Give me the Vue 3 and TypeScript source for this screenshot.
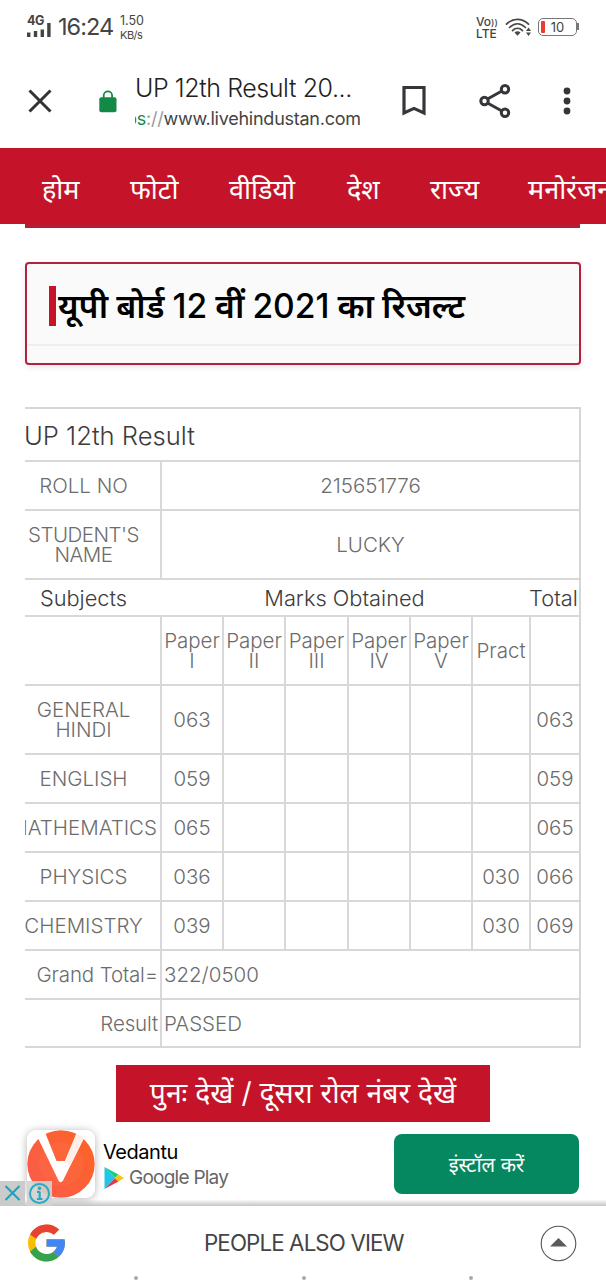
<script setup lang="ts">
interface Subject {
  name: string
  marks: string
  pract: string
  total: string
  kind: string
}

const menu: string[] = ['होम', 'फोटो', 'वीडियो', 'देश', 'राज्य', 'मनोरंजन']

const papers: string[] = ['I', 'II', 'III', 'IV', 'V']

const subjects: Subject[] = [
  { name: 'GENERAL HINDI', marks: '063', pract: '', total: '063', kind: 'tall' },
  { name: 'ENGLISH', marks: '059', pract: '', total: '059', kind: '' },
  { name: 'MATHEMATICS', marks: '065', pract: '', total: '065', kind: 'clipped' },
  { name: 'PHYSICS', marks: '036', pract: '030', total: '066', kind: '' },
  { name: 'CHEMISTRY', marks: '039', pract: '030', total: '069', kind: '' },
]

const summary: { label: string; value: string }[] = [
  { label: 'Grand Total=', value: '322/0500' },
  { label: 'Result', value: 'PASSED' },
]
</script>

<template>
  <div class="screen">
    <header class="status">
      <div class="signal">
        <span class="net">4G</span>
        <svg width="24" height="15" viewBox="0 0 24 15">
          <path d="M0 10.500h3.400V15H0zM6.800 9h3.400v6H6.800zM13.600 7.500h3.400V15h-3.400zM20.200 1h3.400v14h-3.400z" fill="#444" />
        </svg>
      </div>
      <span class="clock">16:24</span>
      <div class="speed"><span>1.50</span><span>KB/s</span></div>
      <div class="grow"></div>
      <div class="volte"><span>Vo<i>))</i></span><span>LTE</span></div>
      <svg class="wifi" width="27" height="20" viewBox="0 0 27 20">
        <g fill="none" stroke="#484848" stroke-width="1.7" stroke-linecap="round">
          <path d="M1.500 6.200C8-.2 17-.2 23.500 6.200" />
          <path d="M4.500 9.500C9.500 4.600 15.500 4.600 20.500 9.500" />
          <path d="M7.500 12.600C10.500 9.600 14.500 9.600 17.500 12.600" />
        </g>
        <path d="M9.500 14.500Q12.500 12 15.500 14.500L12.500 17.700z" fill="#484848" />
        <path d="M21 13l2.500-3.500L26 13zM21 14.500h5L23.500 18z" fill="#484848" />
      </svg>
      <div class="battery"><i></i><span>10</span></div>
    </header>

    <section class="browser">
      <svg class="close" width="26" height="26" viewBox="0 0 26 26">
        <path d="M2.500 2.500l21 21M23.500 2.500l-21 21" stroke="#333" stroke-width="3" fill="none" />
      </svg>
      <svg class="lock" width="18" height="23" viewBox="0 0 18 23">
        <path d="M4.700 8V5.500a4.200 4.200 0 0 1 8.400 0V8" fill="none" stroke="#128a45" stroke-width="1.800" />
        <rect x="0.300" y="7.300" width="17.200" height="15" rx="2" fill="#128a45" />
      </svg>
      <div class="address">
        <span class="title">UP 12th Result 20...</span>
        <span class="url"><b>ps</b><em>://</em>www.livehindustan.com</span>
      </div>
      <svg class="mark" width="24" height="31" viewBox="0 0 24 31">
        <path d="M2 2.500h20V28l-10-4.600L2 28z" fill="none" stroke="#35363a" stroke-width="3.200" />
      </svg>
      <svg class="share" width="32" height="36" viewBox="0 0 32 36">
        <g fill="none" stroke="#35363a" stroke-width="3">
          <path d="M8.500 16L22 8.500M8.500 20L22 27.500" />
          <circle cx="5.500" cy="18" r="3.700" />
          <circle cx="26" cy="6.300" r="3.700" />
          <circle cx="26" cy="29.700" r="3.700" />
        </g>
      </svg>
      <svg class="more" width="8" height="28" viewBox="0 0 8 28">
        <g fill="#35363a"><circle cx="4" cy="4" r="3.400" /><circle cx="4" cy="14" r="3.400" /><circle cx="4" cy="24" r="3.400" /></g>
      </svg>
    </section>

    <nav class="menu">
      <a v-for="(m, i) in menu" :key="m" :class="'m' + i">{{ m }}</a>
    </nav>
    <div class="strip"></div>

    <section class="headline">
      <div class="headline-row">
        <h1>यूपी बोर्ड <span>12</span> वीं <span>2021</span> का रिजल्ट</h1>
      </div>
    </section>

    <section class="marks">
      <div class="cell caption"><span>UP 12th Result</span></div>

      <div class="cell label line"><span>ROLL NO</span></div>
      <div class="cell wide"><span>215651776</span></div>

      <div class="cell label line"><span class="student">STUDENT'S<br />NAME</span></div>
      <div class="cell wide"><span>LUCKY</span></div>

      <div class="cell label dark"><span>Subjects</span></div>
      <div class="cell six dark"><span>Marks Obtained</span></div>
      <div class="cell dark sum"><span>Total</span></div>

      <div class="cell label line"></div>
      <div v-for="p in papers" :key="p" class="cell line"><span>Paper<br />{{ p }}</span></div>
      <div class="cell line"><span>Pract</span></div>
      <div class="cell"></div>

      <template v-for="s in subjects" :key="s.name">
        <div class="cell label line subject" :class="s.kind"><span>{{ s.name }}</span></div>
        <div class="cell line"><span>{{ s.marks }}</span></div>
        <div v-for="n in 4" :key="n" class="cell line"></div>
        <div class="cell line"><span>{{ s.pract }}</span></div>
        <div class="cell"><span>{{ s.total }}</span></div>
      </template>

      <template v-for="r in summary" :key="r.label">
        <div class="cell label line right"><span>{{ r.label }}</span></div>
        <div class="cell wide left"><span>{{ r.value }}</span></div>
      </template>
    </section>

    <button class="again">पुनः देखें / दूसरा रोल नंबर देखें</button>

    <section class="ad">
      <svg class="app" width="68" height="68" viewBox="0 0 68 68">
        <defs>
          <clipPath id="tile"><rect width="68" height="68" rx="9" /></clipPath>
          <linearGradient id="warm" x1="0" y1="1" x2="1" y2="0.200">
            <stop offset="0" stop-color="#fb5a50" /><stop offset="1" stop-color="#fb6426" />
          </linearGradient>
        </defs>
        <rect width="68" height="68" rx="9" fill="#fff" />
        <g clip-path="url(#tile)">
          <circle cx="34" cy="34" r="33.700" fill="url(#warm)" />
          <circle cx="34" cy="34" r="22" fill="#ff7048" opacity="0.350" />
          <path d="M9 4L17.500 1 29.500 31h8.500L50.500 1 59 4 36 50.500q-2.300 3.500-4.500 0z" fill="#fff" />
          <path d="M49.300 4L57.500 7 43 36l-5-5z" fill="#fdeeea" />
        </g>
      </svg>
      <div class="store">
        <span class="name">Vedantu</span>
        <div class="play">
          <svg width="20" height="24" viewBox="0 0 20 24">
            <path d="M0.500 1v22L11 12z" fill="#20c5ea" />
            <path d="M0.500 1L11 12l3.500-3.500z" fill="#16cf86" />
            <path d="M0.500 23L11 12l3.500 3.500z" fill="#e63950" />
            <path d="M14.500 8.500L20 12l-5.500 3.500L11 12z" fill="#fbc50e" />
          </svg>
          <span>Google Play</span>
        </div>
      </div>
      <button class="install">इंस्टॉल करें</button>
      <div class="adtools">
        <svg width="25" height="25" viewBox="0 0 25 25">
          <rect width="25" height="25" fill="#cbcbcb" />
          <path d="M5.500 5l14 14M19.500 5l-14 14" stroke="#16a3bd" stroke-width="2" />
        </svg>
        <svg width="25" height="25" viewBox="0 0 25 25">
          <rect width="25" height="25" fill="#d3d1cf" fill-opacity="0.900" />
          <circle cx="12.500" cy="12.500" r="9.500" fill="none" stroke="#2ba9c0" stroke-width="2" />
          <path d="M12.700 10.500V18M10 10.800h2.700M10 18h5.500" stroke="#2ba9c0" stroke-width="2.200" />
          <circle cx="12.500" cy="7.300" r="1.700" fill="#2ba9c0" />
        </svg>
      </div>
    </section>

    <footer class="sheet">
      <svg class="google" width="37" height="38" viewBox="4 4 40 40">
        <path fill="#fbbc05" d="M43.600 20H42v0H24v8h11.300C33.700 32.700 29.200 36 24 36c-6.600 0-12-5.400-12-12s5.400-12 12-12c3.100 0 5.800 1.200 8 3l5.700-5.600C34 6.100 29.300 4 24 4 13 4 4 13 4 24s9 20 20 20 20-9 20-20c0-1.300-.1-2.700-.4-4z" />
        <path fill="#e84235" d="M6.300 14.700l6.600 4.800C14.700 15.100 19 12 24 12c3.100 0 5.800 1.200 8 3l5.700-5.600C34 6.100 29.300 4 24 4 16.300 4 9.700 8.300 6.300 14.700z" />
        <path fill="#34a350" d="M24 44c5.200 0 9.900-2 13.400-5.200l-6.200-5.200C29.200 35.100 26.700 36 24 36c-5.200 0-9.600-3.300-11.300-7.900l-6.500 5C9.500 39.600 16.200 44 24 44z" />
        <path fill="#4285f4" d="M43.600 20H24v8h11.300c-.8 2.200-2.200 4.200-4.100 5.600l6.200 5.200C37 39.200 44 34 44 24c0-1.300-.1-2.700-.4-4z" />
      </svg>
      <span class="people">PEOPLE ALSO VIEW</span>
      <svg class="up" width="37" height="37" viewBox="0 0 37 37">
        <circle cx="18.500" cy="18.500" r="17.300" fill="#fff" stroke="#555" stroke-width="1.100" />
        <path d="M10 21.500L18.500 13l8.500 8.500z" fill="#5a5b5f" />
      </svg>
      <div class="dots"><i></i><i></i><i></i></div>
    </footer>
  </div>
</template>

<style>
body {
  background: #fff;
}
</style>

<style scoped>
.screen {
  width: 606px;
  height: 1280px;
  overflow: hidden;
  background: #fff;
  font-family: Inter, 'Noto Sans', sans-serif;
  color: #444;
  display: flex;
  flex-direction: column;
}
.screen * {
  box-sizing: border-box;
}
.screen > * {
  flex: none;
}
.status {
  height: 56px;
  display: flex;
  padding: 0 29px 0 27px;
}
.signal {
  width: 31px;
  padding-top: 14px;
  display: flex;
  flex-direction: column;
}
.net {
  font-size: 12.5px;
  line-height: 14px;
  font-weight: 700;
  height: 8px;
  letter-spacing: -0.5px;
}
.signal svg {
  display: block;
}
.clock {
  font-size: 23.5px;
  line-height: 30px;
  padding-top: 12px;
  width: 62px;
  letter-spacing: -0.95px;
  white-space: nowrap;
}
.speed {
  display: flex;
  flex-direction: column;
  font-size: 12.5px;
  line-height: 15px;
  padding-top: 13px;
}
.speed span:last-child {
  font-size: 11px;
  letter-spacing: -0.5px;
}
.grow {
  flex: 1;
}
.volte {
  display: flex;
  flex-direction: column;
  font-size: 12px;
  line-height: 11px;
  font-weight: 500;
  padding-top: 16px;
  width: 29px;
}
.volte i {
  font-style: normal;
  font-size: 9px;
}
.wifi {
  margin-top: 18px;
}
.battery {
  position: relative;
  margin: 18px 0 0 6px;
  width: 39px;
  height: 18px;
  border: 1.5px solid #777;
  border-radius: 5px;
  display: flex;
  align-items: center;
  justify-content: center;
  font-size: 13px;
}
.battery i {
  position: absolute;
  left: 2px;
  top: 2px;
  width: 3.5px;
  height: 12px;
  background: #ee3b30;
  border-radius: 1px;
}
.battery::after {
  content: '';
  position: absolute;
  right: -3px;
  top: 4px;
  width: 2px;
  height: 7px;
  background: #777;
}
.browser {
  height: 92px;
  display: flex;
  padding-left: 27px;
}
.close {
  margin-top: 32px;
}
.lock {
  margin: 34px 0 0 46px;
}
.address {
  margin-left: 18px;
  width: 240px;
  padding-top: 15px;
  display: flex;
  flex-direction: column;
  overflow: hidden;
  white-space: nowrap;
}
.title {
  font-size: 25px;
  line-height: 34px;
  font-weight: 300;
  letter-spacing: -0.42px;
  color: #222;
}
.url {
  font-size: 18px;
  line-height: 28px;
  margin-left: -9px;
  letter-spacing: -0.25px;
  color: #444;
}
.url b {
  font-weight: 400;
  color: #128a45;
}
.url em {
  font-style: normal;
  color: #999;
}
.mark {
  margin: 29px 0 0 27px;
}
.share {
  margin: 27px 0 0 53px;
}
.more {
  margin: 31px 0 0 52px;
}
.menu {
  height: 76px;
  background: #c51429;
  display: flex;
  align-items: center;
  padding: 5px 0 0 42px;
  color: #fff;
  font-size: 27px;
  white-space: nowrap;
  overflow: hidden;
}
.menu a {
  flex: none;
  width: 88px;
}
.menu .m1 { width: 99px; }
.menu .m2 { width: 118px; }
.menu .m3 { width: 83px; }
.menu .m4 { width: 98px; }
.strip {
  height: 4px;
  margin: 0 26px 0 25px;
  background: #b81c35;
}
.headline {
  margin: 34px 25px 0 25px;
  height: 103px;
  border: 2px solid #b0233f;
  border-radius: 4px;
  background: #fafafa;
  box-shadow: 0 2px 6px rgba(0, 0, 0, 0.1);
}
.headline-row {
  height: 82px;
  border-bottom: 2px solid #eee;
  padding: 22px 0 0 22px;
}
h1 {
  margin: 0;
  height: 40px;
  border-left: 7px solid #c51429;
  padding-left: 2px;
  font-size: 33.6px;
  line-height: 40px;
  font-weight: 600;
  word-spacing: -0.4px;
  color: #000;
  white-space: nowrap;
}
h1 span {
  font-weight: 500;
}
.marks {
  margin: 42px 25px 0 25px;
  width: 556px;
  display: grid;
  grid-template-columns: 137px 62px 62px 63px 62px 62px 58px 48px;
  grid-template-rows: 53px 49px 69px 37px 69px 69px 49px 49px 49px 49px 49px 48px;
  border: solid #d6d6d6;
  border-width: 2px 2px 0 0;
  font-size: 20.5px;
  font-weight: 300;
  line-height: 20px;
  color: #6c6c6c;
}
.cell {
  border-bottom: 2px solid #d8d8d8;
  display: flex;
  align-items: center;
  justify-content: center;
  text-align: center;
  min-width: 0;
  padding-top: 1px;
}
.cell.line {
  border-right: 2px solid #d8d8d8;
}
.cell.caption {
  grid-column: 1 / -1;
  justify-content: flex-start;
  font-size: 25.6px;
  padding-top: 3px;
  color: #3c3c3c;
}
.caption span {
  margin-left: -1px;
}
.wide {
  grid-column: 2 / -1;
}
.six {
  grid-column: 2 / 8;
  padding-right: 4px;
}
.dark {
  font-size: 21.8px;
  color: #3c3c3c;
}
.sum {
  padding-right: 3px;
}
.label {
  padding-right: 18px;
}
.label.dark {
  padding-right: 20px;
}
.student {
  letter-spacing: -0.5px;
}
.subject {
  white-space: nowrap;
}
.subject.tall {
  white-space: normal;
}
.clipped {
  justify-content: flex-end;
  overflow: hidden;
  padding-right: 3px;
}
.right {
  justify-content: flex-end;
  padding-right: 2px;
  letter-spacing: -0.15px;
}
.left {
  justify-content: flex-start;
  padding-left: 2px;
}
.again {
  margin: 17px 0 0 116px;
  width: 374px;
  height: 57px;
  border: 0;
  padding: 0;
  background: #c51429;
  color: #fff;
  font-family: inherit;
  font-size: 28.3px;
  line-height: 53px;
  white-space: nowrap;
}
.ad {
  position: relative;
  height: 84px;
  padding: 8px 27px 0 27px;
  display: flex;
  background: linear-gradient(#fff 92%, #c4c4c4);
}
.app {
  border-radius: 9px;
  box-shadow: 0 1px 8px rgba(0, 0, 0, 0.3);
}
.store {
  margin-left: 8px;
  padding-top: 8px;
  width: 291px;
}
.name {
  display: block;
  font-size: 20px;
  line-height: 28px;
  letter-spacing: -0.45px;
  color: #000;
}
.play {
  display: flex;
  align-items: center;
  margin-left: 1px;
  font-size: 19px;
  line-height: 24px;
  letter-spacing: -0.75px;
  color: #666;
}
.play span {
  margin-left: 5px;
}
.install {
  margin-top: 4px;
  width: 185px;
  height: 60px;
  border: 0;
  border-radius: 8px;
  background: #05875f;
  color: #fff;
  font-family: inherit;
  font-size: 20px;
  padding: 0;
}
.adtools {
  position: absolute;
  left: 0;
  bottom: 0;
  display: flex;
  gap: 2px;
}
.sheet {
  position: relative;
  height: 74px;
  background: #fff;
  display: flex;
  padding-left: 28px;
}
.google {
  margin-top: 18px;
}
.people {
  margin: 21px 0 0 139px;
  width: 336px;
  font-size: 22.3px;
  line-height: 32px;
  letter-spacing: -0.87px;
}
.up {
  margin-top: 19px;
}
.dots {
  position: absolute;
  left: 134px;
  right: 133px;
  bottom: 0;
  display: flex;
  justify-content: space-between;
}
.dots i {
  width: 4px;
  height: 4px;
  border-radius: 50%;
  background: #aaa;
}
</style>
